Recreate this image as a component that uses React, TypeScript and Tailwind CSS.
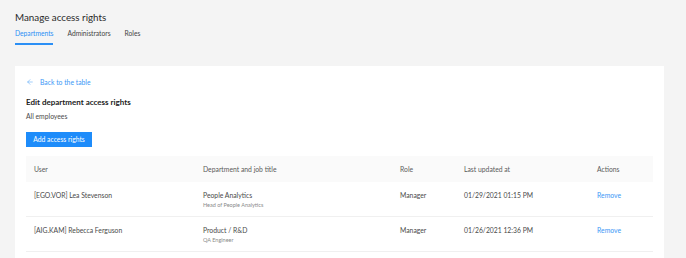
import React from 'react';
import { ArrowLeft } from 'lucide-react';

type Row = {
  user: string;
  department: string;
  jobTitle: string;
  role: string;
  updatedAt: string;
};

const rows: Row[] = [
  {
    user: '[EGO.VOR] Lea Stevenson',
    department: 'People Analytics',
    jobTitle: 'Head of People Analytics',
    role: 'Manager',
    updatedAt: '01/29/2021 01:15 PM',
  },
  {
    user: '[AIG.KAM] Rebecca Ferguson',
    department: 'Product / R&D',
    jobTitle: 'QA Engineer',
    role: 'Manager',
    updatedAt: '01/26/2021 12:36 PM',
  },
];

const tabs = ['Departments', 'Administrators', 'Roles'];

export default function App() {
  return (
    <div className="min-h-screen bg-[#f4f4f4] font-['Lato','Liberation_Sans',sans-serif] text-[#4a4a4a]">
      {/* Header */}
      <div className="pl-[15px] pr-[22px] pt-[11px]">
        <h1 className="text-[9.8px] leading-[13px] text-[#2a2a2a]">Manage access rights</h1>
        <div className="mt-[5px] flex gap-[14px] text-[6.7px] leading-[9px]">
          {tabs.map((tab, i) => (
            <div
              key={tab}
              className={`pb-[5px] border-b-2 ${
                i === 0 ? 'border-[#2b8ff5] text-[#2b8ff5]' : 'border-transparent text-[#444]'
              }`}
            >
              {tab}
            </div>
          ))}
        </div>

        {/* Card */}
        <div className="mt-[21px] bg-white pl-[11px] pr-[11px] pt-[12px] pb-[40px] text-[6.8px]">
          <a className="flex items-center gap-[6px] text-[#3b97f6] leading-[8px]">
            <ArrowLeft size={8} strokeWidth={1.4} />
            <span>Back to the table</span>
          </a>

          <h2 className="mt-[11px] text-[8px] font-bold leading-[10px] text-[#222]">
            Edit department access rights
          </h2>
          <p className="mt-[5px] leading-[9px]">All employees</p>

          <button className="mt-[11px] h-[15px] w-[66px] bg-[#1e8cfa] leading-[15px] text-white">
            Add access rights
          </button>

          {/* Table */}
          <div className="mt-[9px]">
            <div className="grid h-[26px] grid-cols-[169px_197px_64px_133px_1fr] items-center bg-[#fafafa] text-[#5a5a5a]">
              <div className="pl-[8px]">User</div>
              <div className="pl-[8px]">Department and job title</div>
              <div className="pl-[8px]">Role</div>
              <div className="pl-[8px]">Last updated at</div>
              <div className="pl-[8px]">Actions</div>
            </div>
            {rows.map((row) => (
              <div
                key={row.user}
                className="grid h-[35px] grid-cols-[169px_197px_64px_133px_1fr] border-b border-[#f0f0f0] pt-[9px] leading-[9px]"
              >
                <div className="pl-[8px]">{row.user}</div>
                <div className="pl-[8px]">
                  <div>{row.department}</div>
                  <div className="text-[5.5px] leading-[10px] text-[#8a8a8a]">{row.jobTitle}</div>
                </div>
                <div className="pl-[8px]">{row.role}</div>
                <div className="pl-[8px]">{row.updatedAt}</div>
                <div className="pl-[8px] text-[#3b97f6]">Remove</div>
              </div>
            ))}
          </div>
        </div>
      </div>
    </div>
  );
}
